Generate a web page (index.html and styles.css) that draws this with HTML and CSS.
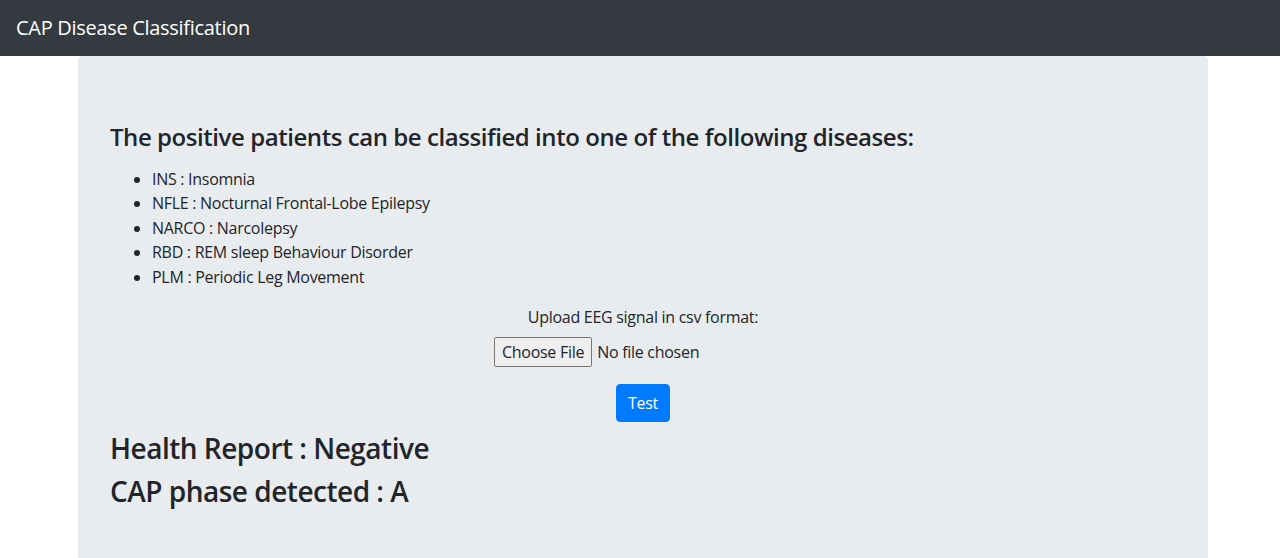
FILE: index.html
```html
<!DOCTYPE html>
<html lang="en">
<head>
<meta charset="utf-8">
<title>CAP Disease Classification</title>
<link rel="stylesheet" href="styles.css">
</head>
<body>
<nav class="navbar">
  <span class="brand">CAP Disease Classification</span>
</nav>
<main class="jumbotron">
  <h4 class="intro">The positive patients can be classified into one of the following diseases:</h4>
  <ul class="diseases">
    <li>INS : Insomnia</li>
    <li>NFLE : Nocturnal Frontal-Lobe Epilepsy</li>
    <li>NARCO : Narcolepsy</li>
    <li>RBD : REM sleep Behaviour Disorder</li>
    <li>PLM : Periodic Leg Movement</li>
  </ul>
  <form class="upload">
    <label class="upload-label" for="file">Upload EEG signal in csv format:</label>
    <div class="file-row">
      <span class="file-btn">Choose File</span><span class="file-name">No file chosen</span>
    </div>
    <button type="button" class="btn-primary">Test</button>
  </form>
  <h3 class="result">Health Report : Negative</h3>
  <h3 class="result">CAP phase detected : A</h3>
</main>
</body>
</html>
```
FILE: styles.css
```css
* { box-sizing: border-box; }
html, body { margin: 0; padding: 0; }
body {
  font-family: "Open Sans", "Noto Sans", sans-serif;
  font-size: 16px;
  line-height: 1.5;
  color: #212529;
  background: #fff;
  height: 558px;
  overflow: hidden;
}
.navbar {
  background: #343a40;
  height: 56px;
  padding: 8px 16px;
  display: flex;
  align-items: center;
}
.brand {
  color: #fff;
  font-size: 20px;
  line-height: 30px;
  letter-spacing: -0.3px;
}
.jumbotron {
  margin-left: 78px;
  width: 1130px;
  background: #e9ecef;
  border-radius: 5px;
  padding: 67px 32px 64px;
  min-height: 520px;
}
.intro {
  margin: 0 0 8px;
  font-size: 24px;
  font-weight: 600;
  line-height: 1.2;
  letter-spacing: -0.44px;
}
.diseases {
  margin: 15px 0 16px;
  padding-left: 42px;
  font-size: 16px;
  line-height: 24.5px;
  letter-spacing: -0.28px;
}
.upload {
  display: flex;
  flex-direction: column;
  align-items: center;
}
.upload-label {
  font-size: 16px;
  line-height: 24px;
  letter-spacing: -0.28px;
}
.file-row {
  margin-top: 8px;
  width: 298px;
  display: flex;
  align-items: center;
  font-size: 16px;
  letter-spacing: -0.28px;
}
.file-btn {
  border: 1px solid #767676;
  background: #efefef;
  border-radius: 2px;
  padding: 2px 7px;
  line-height: 24px;
  height: 30px;
}
.file-name { margin-left: 5px; }
.btn-primary {
  margin-top: 17px;
  background: #007bff;
  color: #fff;
  border: 1px solid #007bff;
  border-radius: 4px;
  padding: 6px 11px;
  font-family: inherit;
  font-size: 16px;
  letter-spacing: -0.28px;
  line-height: 24px;
  height: 38px;
}
.result {
  margin: 9px 0 0;
  font-size: 28px;
  font-weight: 600;
  line-height: 35px;
  letter-spacing: -0.5px;
}
.result + .result { margin-top: 8px; }
```
